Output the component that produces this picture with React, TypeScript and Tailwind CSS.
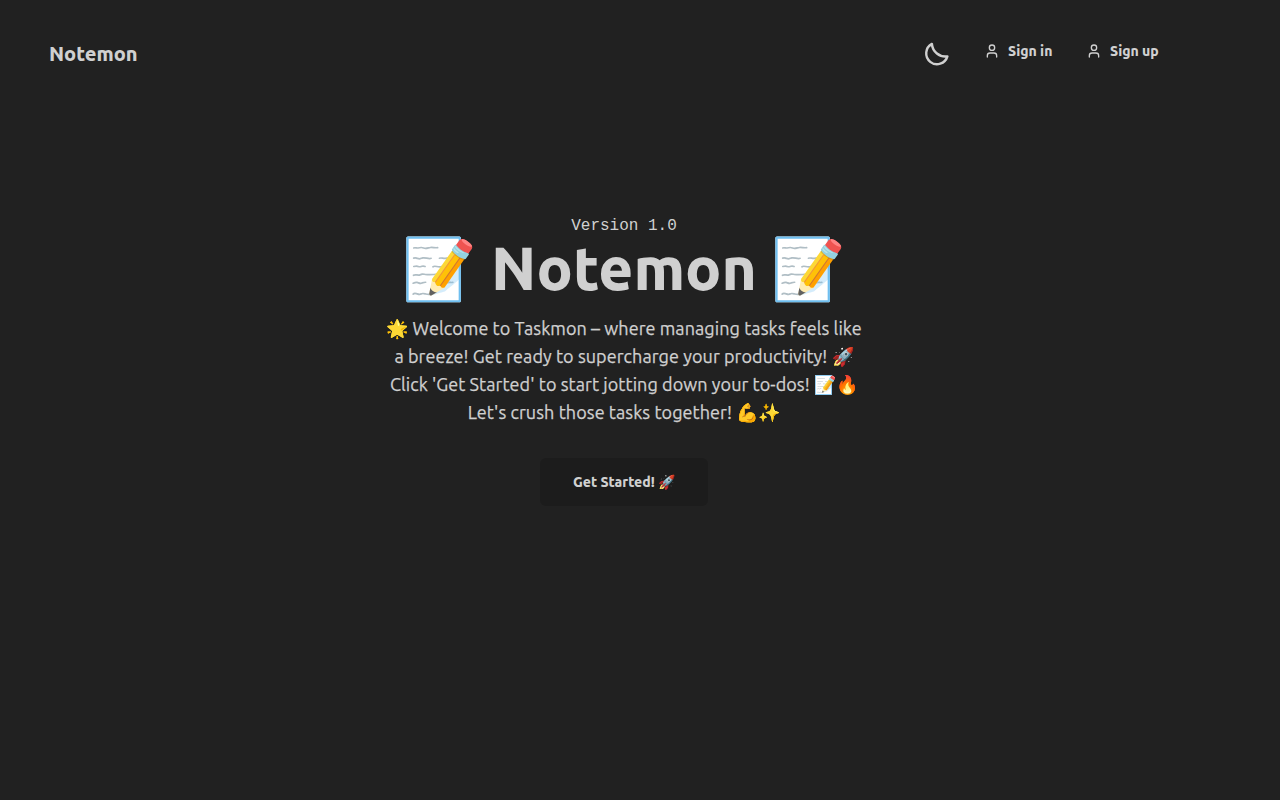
import React from "react";
import { User } from "lucide-react";

function MoonIcon() {
  return (
    <svg width="28" height="28" viewBox="0 0 28 28" fill="none" stroke="currentColor" strokeWidth="2.4" strokeLinejoin="round">
      <path d="M9.9 3.9 A13.6 13.6 0 0 0 25.4 16.4 A10.8 10.8 0 1 1 9.9 3.9Z" />
    </svg>
  );
}

function NavLink({ label, width }: { label: string; width: string }) {
  return (
    <a className="flex items-center gap-2 text-sm font-extrabold whitespace-nowrap">
      <User size={16} strokeWidth={2} />
      <span className={width}>{label}</span>
    </a>
  );
}

export default function App() {
  return (
    <div className="flex h-screen flex-col bg-[#212121] font-['Ubuntu','Open_Sans',sans-serif] text-[#d0d0d0]">
      <header className="flex h-[108px] items-center justify-between pr-[120px] pl-[49px]">
        <h1 className="text-xl font-extrabold">Notemon</h1>
        <nav className="flex items-center gap-[34px]">
          <MoonIcon />
          <div className="flex gap-[34px] pb-[6px]">
            <NavLink label="Sign in" width="w-[44px]" />
            <NavLink label="Sign up" width="w-[50px]" />
          </div>
        </nav>
      </header>
      <main className="flex w-[1248px] flex-col items-center pt-[106px] text-center">
        <p className="font-['Liberation_Mono',monospace] text-base">Version 1.0</p>
        <h2 className="text-6xl font-extrabold whitespace-nowrap">📝 Notemon 📝</h2>
        <p className="mt-4 text-lg leading-7 tracking-[0.075px] [-webkit-text-stroke:0.25px_#d0d0d0]">
          🌟 Welcome to Taskmon – where managing tasks feels like
          <br />a breeze! Get ready to supercharge your productivity! 🚀
          <br />Click 'Get Started' to start jotting down your to-dos! 📝🔥
          <br />Let's crush those tasks together! 💪✨
        </p>
        <button className="mt-8 h-12 w-[168px] rounded-md bg-[#1c1c1c] text-sm font-extrabold">Get Started! 🚀</button>
      </main>
    </div>
  );
}
